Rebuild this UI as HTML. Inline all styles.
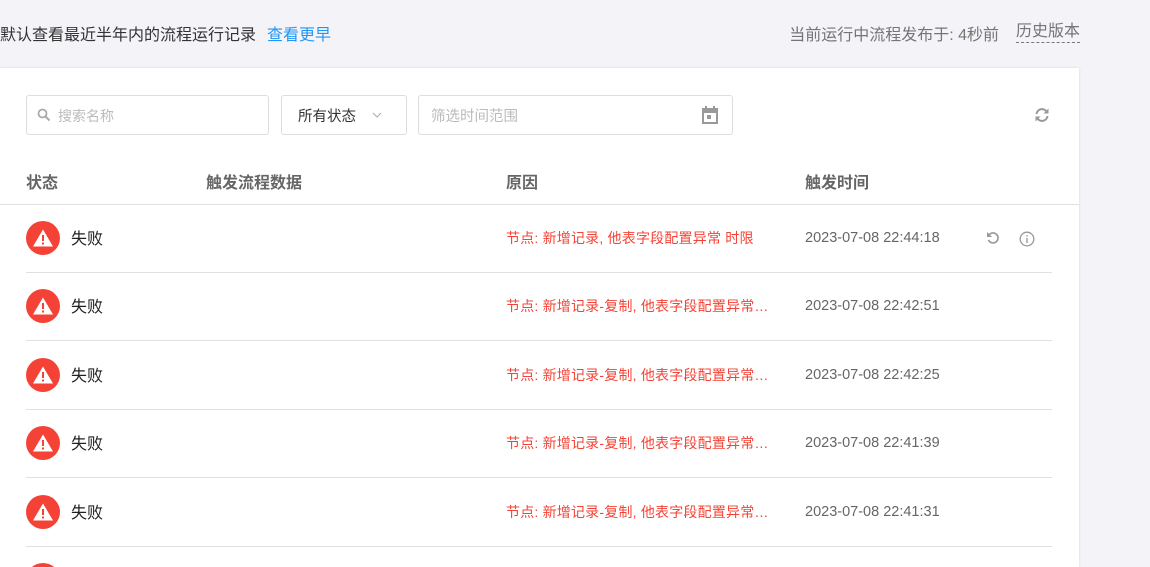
<!DOCTYPE html>
<html><head><meta charset="utf-8"><style>
*{margin:0;padding:0;box-sizing:border-box}
html{overflow:hidden;height:567px}
body{width:1150px;height:567px;overflow:hidden;background:#f4f4f8;font-family:"Liberation Sans","Noto Sans CJK SC",sans-serif;position:relative}
.a{position:absolute;white-space:nowrap}
.card{position:absolute;left:0;top:68px;width:1079px;height:499px;background:#fff;box-shadow:0 0 3px rgba(0,0,0,.1);overflow:hidden}
.box{position:absolute;top:27px;height:40px;border:1px solid #ddd;border-radius:3px}
.th{position:absolute;top:101px;font-size:16px;font-weight:bold;color:#666}
.sep{position:absolute;left:26px;width:1026px;height:1px;background:#e0e0e0}
.ic{position:absolute;left:26px;width:34px;height:34px;border-radius:50%;background:#f44336}
.st{position:absolute;left:71px;font-size:16px;color:#222}
.rs{position:absolute;left:506px;font-size:14px;letter-spacing:0.2px;color:#f44336}
.tm{position:absolute;left:805px;font-size:14.5px;color:#666}
</style></head><body>
<div class="a" style="left:0;top:21px;font-size:16px;color:#333">默认查看最近半年内的流程运行记录<span style="color:#2196f3;margin-left:11px">查看更早</span></div>
<div class="a" style="right:151px;top:21px;font-size:16px;color:#757575">当前运行中流程发布于: 4秒前</div>
<div class="a" style="left:1016px;top:21px;font-size:16px;color:#757575;border-bottom:1px dashed #777;line-height:21px">历史版本</div>
<div class="card">
<div class="box" style="left:26px;width:243px"><svg style="position:absolute;left:10px;top:12px" width="14" height="14" viewBox="0 0 14 14"><circle cx="5.5" cy="5.5" r="4" fill="none" stroke="#aaa" stroke-width="1.8"/><path d="M8.5 8.5L12.5 12.5" stroke="#aaa" stroke-width="2"/></svg><span class="a" style="left:31px;top:10px;font-size:14px;color:#bbb">搜索名称</span></div>
<div class="box" style="left:281px;width:126px"><span class="a" style="left:16px;top:9px;font-size:14.5px;color:#333">所有状态</span><svg style="position:absolute;left:90px;top:15px" width="10" height="8"><path d="M1 2l4 4 4-4" fill="none" stroke="#aaa" stroke-width="1"/></svg></div>
<div class="box" style="left:418px;width:315px"><span class="a" style="left:12px;top:9px;font-size:14.5px;color:#bbb">筛选时间范围</span><svg style="position:absolute;left:283px;top:10px" width="16" height="18" viewBox="0 0 16 18"><rect x="1" y="3" width="14" height="14" fill="none" stroke="#999" stroke-width="2"/><rect x="1" y="3" width="14" height="4" fill="#999"/><rect x="3" y="0" width="2" height="4" fill="#999"/><rect x="11" y="0" width="2" height="4" fill="#999"/><rect x="5" y="9" width="4" height="4" fill="#999"/></svg></div>
<svg style="position:absolute;left:1034px;top:39px" width="16" height="16" viewBox="0 0 16 16"><path d="M2.5 7A5.5 5.5 0 0 1 12.5 4.5M13.5 9A5.5 5.5 0 0 1 3.5 11.5" fill="none" stroke="#999" stroke-width="2"/><path d="M14.5 1.5v5h-5z M1.5 14.5v-5h5z" fill="#999"/></svg>
<div class="th" style="left:26px">状态</div>
<div class="th" style="left:206px">触发流程数据</div>
<div class="th" style="left:506px">原因</div>
<div class="th" style="left:805px">触发时间</div>
<div style="position:absolute;left:0;top:136px;width:1079px;height:1px;background:#e0e0e0"></div>
<div id="rows" style="position:absolute;left:0;top:-68px;width:1150px;height:567px"></div>
</div>
<script>
var ys=[238,306,375,443,512,580],h='';
ys.forEach(function(y,i){
var r=i==0?'节点: 新增记录, 他表字段配置异常 时限':'节点: 新增记录-复制, 他表字段配置异常…';
var t=['22:44:18','22:42:51','22:42:25','22:41:39','22:41:31','22:41:00'][i];
h+='<div class="ic" style="top:'+(y-17)+'px"><svg width="34" height="34" viewBox="0 0 34 34"><path d="M17 8.5L27 25.5H7z" fill="#fff"/><rect x="16" y="14" width="2" height="6" fill="#f44336"/><rect x="16" y="21.5" width="2" height="2" fill="#f44336"/></svg></div>';
if(i<5){
h+='<div class="st a" style="top:'+(y-13)+'px">失败</div>';
h+='<div class="rs a" style="top:'+(y-10)+'px">'+r+'</div>';
h+='<div class="tm a" style="top:'+(y-8)+'px">2023-07-08 '+t+'</div>';
h+='<div class="sep" style="top:'+(y+34)+'px"></div>';}
});
document.getElementById('rows').innerHTML=h;
</script>
<svg style="position:absolute;left:985px;top:230px" width="16" height="16" viewBox="0 0 16 16"><path d="M4 5A5 5 0 1 1 3.5 10" fill="none" stroke="#999" stroke-width="1.6"/><path d="M2 2v5h5z" fill="#999"/></svg>
<svg style="position:absolute;left:1019px;top:231px" width="16" height="16" viewBox="0 0 16 16"><circle cx="8" cy="8" r="6.8" fill="none" stroke="#999" stroke-width="1.3"/><rect x="7.3" y="7" width="1.4" height="5" fill="#999"/><rect x="7.3" y="4.2" width="1.4" height="1.4" fill="#999"/></svg>
</body></html>
